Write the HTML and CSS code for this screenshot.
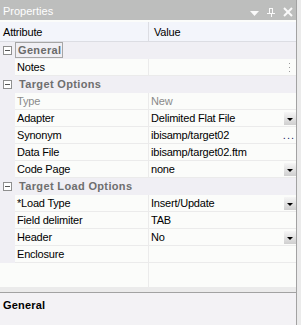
FILE: index.html
```html
<!DOCTYPE html>
<html lang="en">
<head>
    <meta charset="UTF-8">
    <meta name="viewport" content="width=device-width, initial-scale=1.0">
    <title>Properties</title>
    <link rel="stylesheet" href="styles.css">
</head>
<body>

    <div class="panel">
        <!-- Title bar -->
        <div class="titlebar">
            <span class="title">Properties</span>
            <svg class="tools" width="45" height="20" viewBox="0 0 45 20">
                <polygon points="1,11 10,11 5.5,16" fill="#fafafa"/>
                <rect x="20.5" y="8.5" width="3" height="5" fill="none" stroke="#fafafa"/>
                <line x1="18" y1="13.5" x2="26" y2="13.5" stroke="#fafafa"/>
                <line x1="22.5" y1="14" x2="22.5" y2="17" stroke="#fafafa"/>
                <line x1="35" y1="8" x2="43" y2="16" stroke="#fafafa" stroke-width="2"/>
                <line x1="43" y1="8" x2="35" y2="16" stroke="#fafafa" stroke-width="2"/>
            </svg>
        </div>

        <!-- Property grid -->
        <div class="grid">
            <div class="head">
                <div class="hcell attr">Attribute</div>
                <div class="hcell">Value</div>
            </div>

            <div class="cat">
                <span class="toggle"></span>
                <span class="cat-name selected">General</span>
            </div>
            <div class="row">
                <div class="gutter"></div>
                <div class="label">Notes</div>
                <div class="value">
                    <svg class="more" width="3" height="9" viewBox="0 0 3 9">
                        <rect x="1" y="0" width="1" height="1" fill="#9a9a9a"/>
                        <rect x="1" y="4" width="1" height="1" fill="#9a9a9a"/>
                        <rect x="1" y="8" width="1" height="1" fill="#9a9a9a"/>
                    </svg>
                </div>
            </div>

            <div class="cat">
                <span class="toggle"></span>
                <span class="cat-name">Target Options</span>
            </div>
            <div class="row disabled">
                <div class="gutter"></div>
                <div class="label">Type</div>
                <div class="value">New</div>
            </div>
            <div class="row">
                <div class="gutter"></div>
                <div class="label">Adapter</div>
                <div class="value">Delimited Flat File<span class="drop"></span></div>
            </div>
            <div class="row">
                <div class="gutter"></div>
                <div class="label">Synonym</div>
                <div class="value">ibisamp/target02<span class="dots">...</span></div>
            </div>
            <div class="row">
                <div class="gutter"></div>
                <div class="label">Data File</div>
                <div class="value">ibisamp/target02.ftm</div>
            </div>
            <div class="row">
                <div class="gutter"></div>
                <div class="label">Code Page</div>
                <div class="value">none<span class="drop"></span></div>
            </div>

            <div class="cat">
                <span class="toggle"></span>
                <span class="cat-name">Target Load Options</span>
            </div>
            <div class="row">
                <div class="gutter"></div>
                <div class="label">*Load Type</div>
                <div class="value">Insert/Update<span class="drop"></span></div>
            </div>
            <div class="row">
                <div class="gutter"></div>
                <div class="label">Field delimiter</div>
                <div class="value">TAB</div>
            </div>
            <div class="row">
                <div class="gutter"></div>
                <div class="label">Header</div>
                <div class="value">No<span class="drop"></span></div>
            </div>
            <div class="row">
                <div class="gutter"></div>
                <div class="label">Enclosure</div>
                <div class="value"></div>
            </div>

            <div class="filler">
                <div class="blank"></div>
                <div class="fill-label"></div>
                <div class="fill-value"></div>
            </div>
        </div>

        <!-- Description -->
        <div class="desc">General</div>
    </div>

</body>
</html>
```

FILE: styles.css
```css
body {
    font-family: "Liberation Sans", Arial, sans-serif;
    font-size: 11px;
    letter-spacing: -0.2px;
    margin: 0;
    background: #ebebeb;
    overflow: hidden;
}
.panel {
    width: 296px;
    border-right: 1px solid #a2a2a2;
    background: #ebebeb;
}
.titlebar {
    display: flex;
    align-items: center;
    height: 20px;
    background: #bdbebd;
    color: #fff;
}
.title {
    padding: 2px 0 0 3px;
    letter-spacing: 0;
}
.tools {
    margin-left: auto;
    margin-right: 2px;
}
.grid {
    background: #fbfcfa;
    padding-top: 2px;
}
.head {
    display: flex;
    height: 19px;
    background: #f3f5fb;
    border-bottom: 1px solid #dcdde3;
}
.hcell {
    display: flex;
    align-items: center;
    padding: 1px 0 0 5px;
    color: #000;
}
.hcell.attr {
    width: 145px;
    padding-left: 3px;
    border-right: 1px solid #dcdde3;
}
.cat {
    display: flex;
    align-items: center;
    height: 16px;
    border-bottom: 1px solid #f0eff4;
    background: #f0eff4;
}
.toggle {
    width: 7px;
    height: 7px;
    margin-left: 3px;
    margin-right: 4px;
    border: 1px solid #8f8f8f;
    background: #fff linear-gradient(#555, #555) no-repeat center / 5px 1px;
}
.cat-name {
    font-weight: bold;
    letter-spacing: 0.35px;
    color: #6e6e6e;
    padding: 0 2px 0 3px;
}
.cat-name.selected {
    margin-left: -1px;
    padding: 1px 1px 1px 2px;
    border: 1px solid #a6a6a6;
    color: #6a6a6a;
}
.row {
    display: flex;
    height: 16px;
    border-bottom: 1px solid #ebebeb;
}
.gutter {
    width: 15px;
    background: #f0eff4;
    margin-bottom: -1px;
}
.label {
    display: flex;
    align-items: center;
    width: 131px;
    padding-left: 2px;
    border-right: 1px solid #ebebeb;
    color: #000;
}
.value {
    display: flex;
    align-items: center;
    flex: 1;
    padding-left: 2px;
    color: #000;
}
.disabled .label,
.disabled .value {
    color: #8a8a8a;
}
.drop {
    width: 12px;
    height: 13px;
    margin-left: auto;
    background: linear-gradient(#f6f6f6, #cfcfcf);
    position: relative;
}
.drop::after {
    content: "";
    position: absolute;
    left: 3px;
    top: 6px;
    border-left: 3px solid transparent;
    border-right: 3px solid transparent;
    border-top: 3px solid #000;
}
.dots {
    margin-left: auto;
    margin-right: 1px;
    color: #1a1a6a;
    letter-spacing: 1px;
}
.more {
    margin-left: auto;
    margin-right: 5px;
}
.filler {
    display: flex;
    height: 24px;
    border-bottom: 5px solid #ebebeb;
}
.blank {
    width: 15px;
}
.fill-label {
    width: 133px;
    border-right: 1px solid #ebebeb;
}
.fill-value {
    flex: 1;
}
.desc {
    height: 40px;
    border-top: 1px solid #a2a2a2;
    background: #f3f2f5;
    padding: 6px 3px 0;
    font-weight: bold;
    letter-spacing: 0.2px;
    color: #000;
}
```
